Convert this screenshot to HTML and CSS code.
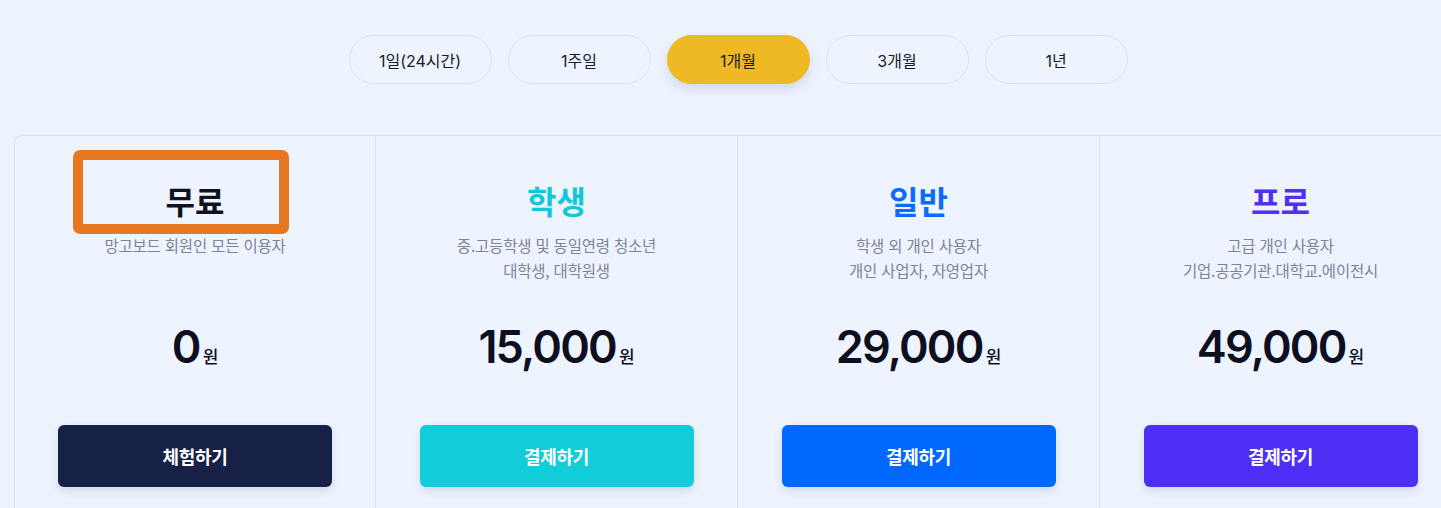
FILE: index.html
```html
<!DOCTYPE html>
<html lang="ko">
<head>
<meta charset="utf-8">
<title>요금제</title>
<link rel="stylesheet" href="styles.css">
</head>
<body>
<div class="page">
  <div class="tabs">
    <button class="tab">1일(24시간)</button>
    <button class="tab">1주일</button>
    <button class="tab active">1개월</button>
    <button class="tab">3개월</button>
    <button class="tab">1년</button>
  </div>
  <div class="plans">
    <div class="plan plan-free">
      <h2 class="plan-title">무료</h2>
      <p class="plan-desc">망고보드 회원인 모든 이용자</p>
      <div class="price"><span class="amount">0</span><span class="unit">원</span></div>
      <button class="cta">체험하기</button>
      <div class="highlight"></div>
    </div>
    <div class="plan plan-student">
      <h2 class="plan-title">학생</h2>
      <p class="plan-desc">중.고등학생 및 동일연령 청소년<br>대학생, 대학원생</p>
      <div class="price"><span class="amount">15,000</span><span class="unit">원</span></div>
      <button class="cta">결제하기</button>
    </div>
    <div class="plan plan-general">
      <h2 class="plan-title">일반</h2>
      <p class="plan-desc">학생 외 개인 사용자<br>개인 사업자, 자영업자</p>
      <div class="price"><span class="amount">29,000</span><span class="unit">원</span></div>
      <button class="cta">결제하기</button>
    </div>
    <div class="plan plan-pro">
      <h2 class="plan-title">프로</h2>
      <p class="plan-desc">고급 개인 사용자<br>기업.공공기관.대학교.에이전시</p>
      <div class="price"><span class="amount">49,000</span><span class="unit">원</span></div>
      <button class="cta">결제하기</button>
    </div>
  </div>
</div>
</body>
</html>
```
FILE: styles.css
```css
* { box-sizing: border-box; }
html, body { margin: 0; padding: 0; }
body {
  background: #eef4fe;
  font-family: Inter, "Noto Sans CJK KR", sans-serif;
  color: #111322;
  overflow: hidden;
  height: 508px;
}
.page {
  width: 1448px;
  margin-left: 14px;
  padding-top: 35px;
}
.tabs {
  display: flex;
  justify-content: center;
  gap: 16px;
}
.tab {
  width: 143px;
  height: 49px;
  border: 1px solid #dce3ef;
  border-radius: 25px;
  background: #eef4fe;
  font-family: Inter, "Noto Sans CJK KR", sans-serif;
  font-size: 16px;
  color: #1a1b28;
  padding: 0;
}
.tab.active {
  background: #eeb924;
  border-color: #eeb924;
  box-shadow: 0 5px 12px rgba(40, 60, 120, 0.15);
}
.plans {
  margin-top: 51px;
  display: grid;
  grid-template-columns: 361px repeat(3, 362px);
  border-top: 1px solid #dbe3f0;
  border-left: 1px solid #dbe3f0;
  border-top-left-radius: 8px;
}
.plan {
  position: relative;
  border-right: 1px solid #dbe3f0;
  text-align: center;
  padding-top: 44px;
  padding-bottom: 40px;
  display: flex;
  flex-direction: column;
  align-items: center;
}
.plan-title {
  margin: 0;
  font-family: "Noto Sans CJK KR", sans-serif;
  font-size: 32px;
  font-weight: 700;
  line-height: 40px;
}
.plan-free .plan-title { color: #0f1222; }
.plan-student .plan-title { color: #13c7d8; }
.plan-general .plan-title { color: #0a6bff; }
.plan-pro .plan-title { color: #5130f4; }
.plan-desc {
  margin: 13px 0 0;
  height: 50px;
  font-family: "Noto Sans CJK KR", sans-serif;
  font-size: 15.5px;
  line-height: 25px;
  letter-spacing: -0.2px;
  color: #7d8399;
}
.price {
  margin-top: 36px;
  height: 56px;
  display: flex;
  align-items: baseline;
  justify-content: center;
}
.amount {
  font-family: Inter, sans-serif;
  font-size: 45px;
  font-weight: 600;
  line-height: 56px;
  letter-spacing: -1.8px;
  color: #0d0f1e;
}
.unit {
  font-family: "Noto Sans CJK KR", sans-serif;
  font-size: 17px;
  font-weight: 500;
  margin-left: 3px;
  color: #0d0f1e;
}
.cta {
  margin-top: 50px;
  width: 274px;
  height: 62px;
  border: 0;
  border-radius: 6px;
  font-family: "Noto Sans CJK KR", sans-serif;
  font-size: 18px;
  font-weight: 700;
  color: #ffffff;
  box-shadow: 0 4px 10px rgba(30, 50, 120, 0.14);
  letter-spacing: -0.3px;
}
.plan-free .cta { background: #172046; }
.plan-student .cta { background: #12ccd9; }
.plan-general .cta { background: #0068ff; }
.plan-pro .cta { background: #4e2ff5; }
.highlight {
  position: absolute;
  left: 58px;
  top: 14px;
  width: 216px;
  height: 84px;
  border: 10px solid #e87722;
  border-radius: 7px;
  pointer-events: none;
}
```
